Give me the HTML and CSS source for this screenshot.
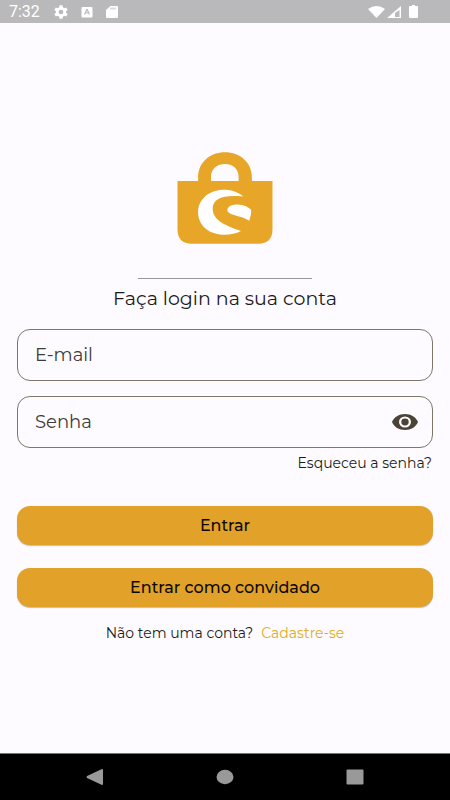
FILE: index.html
```html
<!DOCTYPE html>
<html lang="pt-BR">
<head>
  <meta charset="utf-8">
  <meta name="viewport" content="width=device-width, initial-scale=1">
  <title>Login</title>
  <link rel="stylesheet" href="styles.css">
</head>
<body>
  <header class="status">
    <div class="status-group">
      <span class="clock">7:32</span>
      <svg class="status-icon gear" viewBox="0 0 24 24"><path fill-rule="evenodd" d="M9.800 2h4.400l.5 3 2.200 1.200 2.900-1.100 2.200 3.800-2.400 1.900v2.400l2.400 1.900-2.200 3.800-2.900-1.100-2.200 1.200-.5 3H9.800l-.5-3-2.200-1.200-2.900 1.100L2 15.100l2.400-1.900v-2.400L2 8.900l2.200-3.800 2.900 1.100L9.300 5zM12 8.500a3.500 3.500 0 1 0 0 7 3.500 3.500 0 0 0 0-7z"/></svg>
      <svg class="status-icon app" viewBox="0 0 12 12"><path fill-rule="evenodd" d="M1.500 1h9a1 1 0 0 1 1 1v8.500a1 1 0 0 1-1 1h-9a1 1 0 0 1-1-1V2a1 1 0 0 1 1-1zM5.300 3 3 8.500h1.200l.5-1.200h2.600l.5 1.200H9L6.700 3zM6 4.300l.8 2H5.200z"/></svg>
      <svg class="status-icon card" viewBox="0 0 12 12"><path fill-rule="evenodd" d="M4.500 0H11a1 1 0 0 1 1 1v10a1 1 0 0 1-1 1H1a1 1 0 0 1-1-1V4zM4.500 1.500v2h1v-2zM6.500 1.500v2h1v-2zM8.500 1.500v2h1v-2z"/></svg>
    </div>
    <div class="status-group signals">
      <svg class="wifi" viewBox="0 0 17 12"><path d="M0 3Q8.500-3 17 3L8.500 12z"/></svg>
      <svg class="cell" viewBox="0 0 14 12"><path fill-rule="evenodd" d="M14 0v12H0zM8 7v4h4.500V4z"/></svg>
      <svg class="battery" viewBox="0 0 9 13"><path d="M3 0h3v1h2a1 1 0 0 1 1 1v10a1 1 0 0 1-1 1H1a1 1 0 0 1-1-1V2a1 1 0 0 1 1-1h2z"/></svg>
    </div>
  </header>

  <main class="login">
    <svg class="logo" viewBox="36 21 288 277" role="img" aria-label="Logo">
      <path class="bag" fill-rule="evenodd" d="M37 108H99V98C99 52 135 22 180 22S261 52 261 98V108H323V254C323 282 308 297 280 297H80C52 297 37 282 37 254zM138 108H221V94C221 71 202 57 180 57S138 71 138 94z"/>
      <path class="mark" d="M235 155C214 139 196 135 177 135C131 135 99 165 99 203C99 242 133 270 178 270C197 270 213 267 228 259C188 244 143 230 143 192C143 162 172 149 235 155z"/>
      <path class="mark" d="M187 196C188 184 202 179 219 179C236 179 249 186 259 195C259 207 257 217 253 228C225 211 187 212 187 196z"/>
    </svg>
    <hr class="rule">
    <h1 class="title">Faça login na sua conta</h1>

    <form class="form">
      <div class="field">
        <input class="input" type="email" placeholder="E-mail" aria-label="E-mail">
      </div>
      <div class="field">
        <input class="input" type="password" placeholder="Senha" aria-label="Senha">
        <button class="reveal" type="button" aria-label="Mostrar senha">
          <svg viewBox="0 0 26 16"><path fill-rule="evenodd" d="M13 0C7 0 2 3 0 8c2 5 7 8 13 8s11-3 13-8C24 3 19 0 13 0zM13 2.500a6 5.500 0 1 1 0 11 6 5.500 0 0 1 0-11z"/><ellipse cx="13" cy="8" rx="3.700" ry="3.400"/></svg>
        </button>
      </div>
      <a class="forgot" href="#">Esqueceu a senha?</a>
      <button class="action" type="submit">Entrar</button>
      <button class="action" type="button">Entrar como convidado</button>
    </form>
    <p class="signup"><span>Não tem uma conta?</span> <a href="#">Cadastre-se</a></p>
  </main>

  <nav class="navbar">
    <button type="button" aria-label="Voltar"><svg viewBox="0 0 18 16"><path d="M16 0q1 0 1 1v14q0 1-1 1L1 9q-1-1 0-2z"/></svg></button>
    <button type="button" aria-label="Início"><svg viewBox="0 0 18 16"><ellipse cx="9" cy="8" rx="8.500" ry="7.200"/></svg></button>
    <button type="button" aria-label="Recentes"><svg viewBox="0 0 18 16"><rect x=".5" y=".5" width="17" height="15" rx="1"/></svg></button>
  </nav>
</body>
</html>
```

FILE: styles.css
```css
* {
  box-sizing: border-box;
}

body {
  margin: 0;
  min-height: 100vh;
  display: flex;
  flex-direction: column;
  background: #fdfbff;
  color: #1c1b1b;
  font-family: Montserrat, Inter, sans-serif;
}

button {
  padding: 0;
  border: 0;
  font-family: inherit;
}

svg {
  display: block;
}

a {
  color: inherit;
  text-decoration: none;
}

.status {
  display: flex;
  align-items: center;
  justify-content: space-between;
  height: 23px;
  padding: 0 32px 0 9px;
  background: #b9b8ba;
  color: #fff;
  fill: #fff;
}

.status-group {
  display: flex;
  align-items: center;
}

.clock {
  width: 44px;
  font-family: Roboto, sans-serif;
  font-size: 16px;
  line-height: 22px;
}

.status-icon {
  width: 12px;
  height: 12px;
}

.gear {
  width: 16px;
  height: 16px;
}

.app {
  margin-left: 12px;
}

.card {
  margin-left: 13px;
}

.signals {
  gap: 2px;
}

.wifi {
  width: 17px;
  height: 12px;
}

.cell {
  width: 14px;
  height: 12px;
}

.battery {
  width: 9px;
  height: 13px;
  margin-left: 6px;
}

.login {
  flex: 1;
  display: flex;
  flex-direction: column;
  align-items: center;
  padding: 129px 17px 24px;
}

.logo {
  width: 96px;
  height: 92px;
}

.bag {
  fill: #e7a628;
}

.mark {
  fill: #fff;
}

.rule {
  width: 42%;
  margin: 34px 0 8px;
  border: 0;
  border-top: 1px solid #98979a;
}

.title {
  margin: 0;
  font-size: 19px;
  font-weight: 400;
  line-height: 24px;
}

.form {
  width: 100%;
  display: flex;
  flex-direction: column;
  margin-top: 18px;
}

.field {
  display: flex;
  align-items: center;
  height: 52px;
  margin-bottom: 15px;
  padding: 0 14px 0 17px;
  border: 1px solid #7c7767;
  border-radius: 13px;
}

.field + .forgot {
  margin-top: -8px;
}

.input {
  flex: 1;
  min-width: 0;
  padding: 0;
  border: 0;
  outline: 0;
  background: none;
  color: #3a352e;
  font-family: inherit;
  font-size: 18px;
  line-height: 24px;
}

.input::placeholder {
  color: #3f3b38;
  opacity: 1;
}

.reveal {
  background: none;
  fill: #4c4337;
}

.reveal svg {
  width: 26px;
  height: 16px;
}

.forgot {
  align-self: flex-end;
  margin-bottom: 35px;
  padding-right: 1px;
  font-size: 14px;
  line-height: 16px;
}

.action {
  height: 39px;
  border-radius: 13px;
  background: #e2a229;
  box-shadow: 0 1px 1px #00000040;
  color: #0d0902;
  font-size: 16px;
  font-weight: 500;
  line-height: 24px;
}

.action + .action {
  margin-top: 23px;
}

.signup {
  display: flex;
  gap: 8px;
  margin: 18px 0 0;
  font-size: 14px;
  line-height: 16px;
}

.signup a {
  color: #e0ad20;
}

.navbar {
  display: flex;
  align-items: center;
  justify-content: space-between;
  height: 47px;
  padding: 0 86px;
  border-top: 1px solid #777;
  background: #000;
}

.navbar button {
  background: none;
  fill: #999;
}

.navbar svg {
  width: 18px;
  height: 16px;
}
```
